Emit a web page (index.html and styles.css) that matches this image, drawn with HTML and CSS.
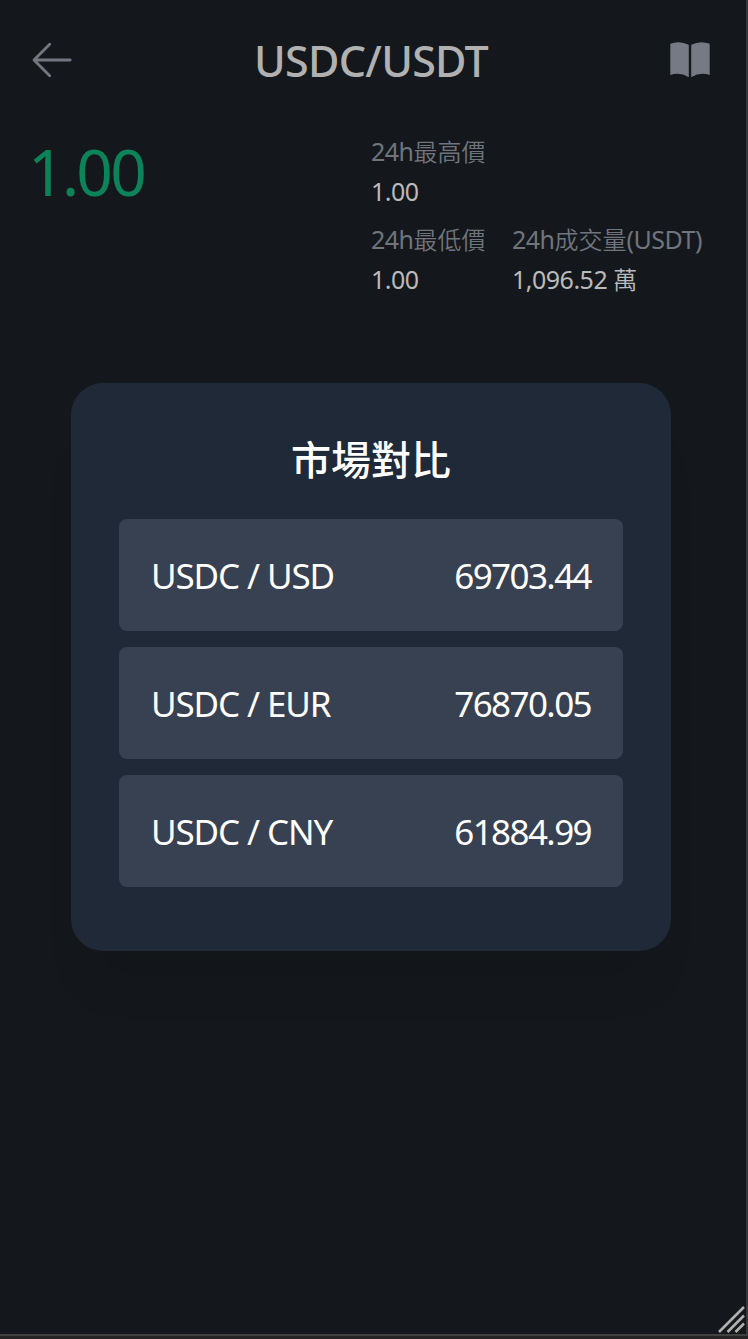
FILE: index.html
```
<!DOCTYPE html>
<html lang="zh-Hant">
<head>
<meta charset="utf-8">
<title>USDC/USDT</title>
<link rel="stylesheet" href="styles.css">
</head>
<body>
<div class="device">
  <main class="screen">
    <header class="topbar">
      <svg class="back" width="40" height="36" viewBox="0 0 40 36"><path d="M17.700 2.200 2 18l15.700 15.800M2.500 18H38.200"/></svg>
      <h1 class="pair">USDC/USDT</h1>
      <svg class="book" width="40" height="36" viewBox="0 0 40 36"><path d="M.3 1.800Q9.500-1.800 18.800 2.800V35.200Q10 29.800 .3 33ZM21.200 2.800Q30.500-1.800 39.700 1.800V33Q30 29.800 21.200 35.200Z"/></svg>
    </header>
    <section class="ticker">
      <div class="price">1.00</div>
      <dl class="stats">
        <div class="stat stat-high"><dt>24h<span class="han">最高價</span></dt><dd>1.00</dd></div>
        <div class="stat"><dt>24h<span class="han">最低價</span></dt><dd>1.00</dd></div>
        <div class="stat"><dt>24h<span class="han">成交量</span>(USDT)</dt><dd>1,096.52 <span class="han">萬</span></dd></div>
      </dl>
    </section>
    <div class="overlay">
      <section class="card">
        <h2 class="card-title">市場對比</h2>
        <ul class="rates">
          <li class="rate"><span class="name">USDC / USD</span><span class="value">69703.44</span></li>
          <li class="rate"><span class="name">USDC / EUR</span><span class="value">76870.05</span></li>
          <li class="rate"><span class="name">USDC / CNY</span><span class="value">61884.99</span></li>
        </ul>
      </section>
    </div>
    <svg class="grip" width="28" height="28" viewBox="0 0 28 28"><path d="M2 27 27 2M10.500 27 27 10.500M18.500 27 27 18.500"/></svg>
  </main>
</div>
</body>
</html>
```
FILE: styles.css
```
* { box-sizing: border-box; margin: 0; padding: 0; }
body {
  background: #262425;
  font-family: "Noto Sans", "Noto Sans CJK TC", sans-serif;
}
.device {
  height: 1339px;
  padding-bottom: 3px;
}
.screen {
  position: relative;
  height: 1336px;
  background: #14181c;
  border-right: 2px solid #3a3a3c;
  border-bottom: 2px solid #414141;
  overflow: hidden;
}
.topbar {
  display: flex;
  align-items: center;
  justify-content: space-between;
  height: 120px;
  padding: 0 36px 0 32px;
}
.back { fill: none; stroke: #757780; stroke-width: 2.8; stroke-linecap: round; stroke-linejoin: round; }
.book { fill: #757a84; }
.pair {
  padding-top: 2px;
  color: #b1b1b1;
  font-size: 43px;
  font-weight: 500;
  line-height: 60px;
  letter-spacing: -0.7px;
}
.ticker { display: flex; padding: 11px 0 0 28px; }
.price {
  width: 343px;
  color: #0d8359;
  font-size: 64px;
  font-weight: 400;
  line-height: 82px;
  letter-spacing: -2.7px;
}
.stats {
  display: grid;
  grid-template-columns: 141px auto;
  row-gap: 8px;
  font-size: 25px;
}
.stat-high { grid-column: 1 / -1; }
.stat dt, .stat dd { height: 40px; line-height: 40px; white-space: nowrap; letter-spacing: -0.5px; }
.stat dt { color: #70747c; }
.stat dd { color: #bababa; }
.han { font-family: "Noto Sans CJK TC", sans-serif; font-weight: 350; font-size: 24px; letter-spacing: 0; }
.overlay {
  position: absolute;
  inset: 0;
  display: flex;
  align-items: center;
  justify-content: center;
  padding-right: 4px;
}
.card {
  width: 600px;
  height: 568px;
  padding: 47px 48px 48px;
  border-radius: 32px;
  background: #202937;
  color: #fff;
  box-shadow: 0 50px 50px -24px rgba(0, 0, 0, 0.1);
}
.card-title {
  font-family: "Noto Sans CJK TC", sans-serif;
  font-size: 40px;
  font-weight: 500;
  line-height: 56px;
  text-align: center;
  margin-bottom: 33px;
}
.rates { display: grid; gap: 16px; list-style: none; }
.rate {
  display: flex;
  align-items: center;
  justify-content: space-between;
  height: 112px;
  padding: 0 32px;
  border-radius: 8px;
  background: #384151;
  font-size: 35px;
}
.name { letter-spacing: -1.1px; }
.value { letter-spacing: -1.6px; }
.grip { position: absolute; right: 1px; bottom: 1px; fill: none; stroke: #b0b0ae; stroke-width: 2.6; }
```
